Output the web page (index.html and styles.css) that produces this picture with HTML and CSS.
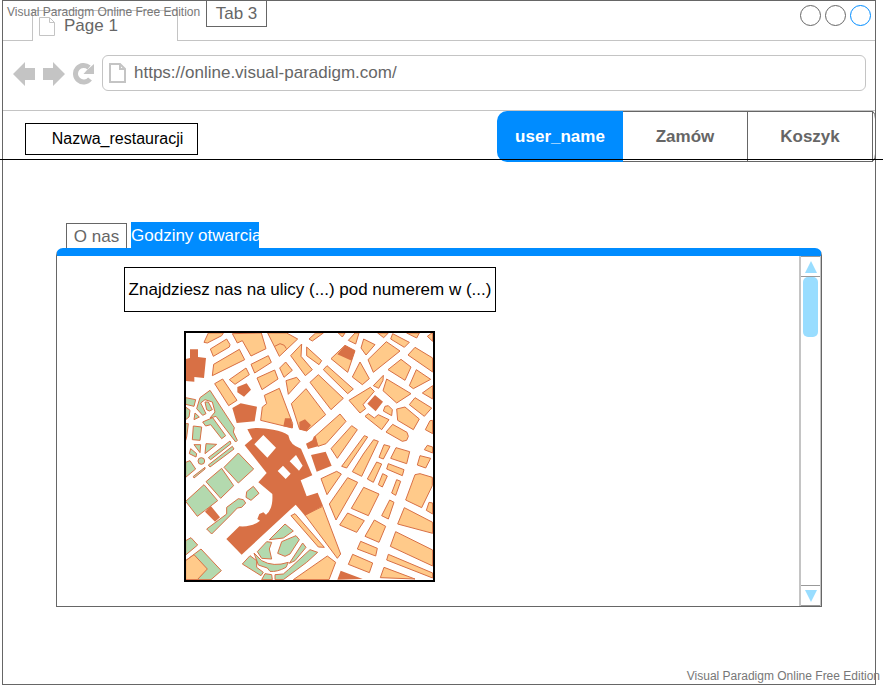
FILE: index.html
```html
<!DOCTYPE html>
<html lang="pl">
<head>
<meta charset="utf-8">
<title>Nazwa_restauracji</title>
<link rel="stylesheet" href="styles.css">
</head>
<body>
<div class="window">
  <div class="tabstrip">
    <div class="strip-start"></div>
    <div class="page-tab">
      <svg class="tab-icon" width="16" height="19" viewBox="0 0 16 19"><path d="M.5 .5H10.500L15.500 5.500V18.500H.5ZM10.500 .5V5.500H15.500" fill="#fff" stroke="#c4c4c4"/></svg>
      <span>Page 1</span>
    </div>
    <div class="strip-rest">
      <button class="tab-3" type="button">Tab 3</button>
      <div class="circles"><i></i><i></i><i class="blue"></i></div>
    </div>
  </div>
  <div class="toolbar">
    <button class="tool" type="button" aria-label="Back"><svg width="22" height="24" viewBox="0 0 22 24"><path d="M0 12L12 0V6H22V18H12V24Z" fill="#c4c4c4"/></svg></button>
    <button class="tool" type="button" aria-label="Forward"><svg width="22" height="24" viewBox="0 0 22 24"><path d="M22 12L10 0V6H0V18H10V24Z" fill="#c4c4c4"/></svg></button>
    <button class="tool" type="button" aria-label="Reload"><svg width="21" height="24" viewBox="0 0 21 24"><path d="M17 17A8.200 8.200 0 1 1 16 5.500" fill="none" stroke="#c4c4c4" stroke-width="5"/><path d="M21 2V12H10.500L14 8Z" fill="#c4c4c4"/></svg></button>
    <label class="address">
      <svg width="17" height="20" viewBox="0 0 17 20"><path d="M1 1H11L16 6V19H1ZM11 1V6H16" fill="#fff" stroke="#c4c4c4" stroke-width="2"/></svg>
      <input type="text" value="https://online.visual-paradigm.com/" aria-label="Address">
    </label>
  </div>
  <header class="site-header">
    <div class="brand">Nazwa_restauracji</div>
    <nav class="menu">
      <button class="active" type="button">user_name</button>
      <button type="button">Zamów</button>
      <button type="button">Koszyk</button>
      <svg class="menu-end" width="3" height="51" viewBox="0 0 3 51"><path d="M0 .5Q2.500 3 2.500 8M2.500 43Q2.500 47 0 50" fill="none" stroke="#666"/></svg>
    </nav>
  </header>
  <main class="content">
    <div class="tabs">
      <button class="tab" type="button">O nas</button>
      <button class="tab selected" type="button">Godziny otwarcia</button>
    </div>
    <section class="panel">
      <div class="panel-body">
        <p class="message">Znajdziesz nas na ulicy (...) pod numerem w (...)</p>
        <svg class="map" viewBox="12 14 753 753" role="img" aria-label="Mapa">
          <rect x="12" y="14" width="753" height="753" fill="#fff"/>
          <g class="block">
            <path d="M85 20H130L125 28L82 50L72 48ZM140 38L150 55L148 62L100 90L91 68ZM97 148L101 114L178 69L194 100ZM157 22L244 20L258 67L213 89L187 43L172 50ZM263 20H320L353 38L298 90ZM213 114L265 88L274 108L224 140ZM231 155L284 131L294 158L246 190ZM148 160L198 125L208 145L165 174ZM104 172L128 158L171 222L146 238ZM299 125L317 107L337 132L312 153ZM318 163L350 153L360 165L325 204ZM332 88L365 53L363 90L397 130L376 148Z"/>
            <path d="M284 60L300 52L313 57L319 67" fill="none"/>
          </g>
          <g class="block" transform="translate(375 0)">
            <path d="M12 38L32 20H55L22 44ZM100 20H120L112 32ZM150 20H162L152 53L130 42ZM218 20H250L236 34ZM263 22L313 48L298 63L257 38ZM305 20H343L335 35ZM367 30L383 18V45ZM176 38L210 55L183 86L168 65ZM244 46L285 74L205 138L189 100ZM330 63L383 95V137L309 86ZM288 99L318 122L300 162L249 130ZM334 130L377 159L325 187L313 178ZM165 107L193 157L172 175L142 152ZM120 57L150 73L128 138L78 97ZM66 118L145 188L128 202L55 130ZM40 145L115 216L78 250L15 168ZM235 147L234 162L221 186L205 178ZM245 158L318 202L275 230L234 193ZM132 222L196 183L208 195L174 235L182 247L165 260ZM240 240L250 238L262 250L260 268L235 254ZM180 270L190 262L208 275L220 265L252 280L230 310ZM275 248L300 242L343 278L325 310L278 282ZM263 294L306 318L310 330L305 342L292 345L243 317ZM330 214L380 245L358 270L313 235ZM352 200L383 178V218ZM375 283L383 282V322L361 310ZM367 357L383 362V380L358 370ZM5 62L50 103L42 115L5 88Z"/>
          </g>
          <g class="block" transform="translate(180 192)">
            <path d="M62 90L67 50L80 40L73 15L118 -6L158 100L157 113ZM154 40L198 -5L257 73L200 122L178 115ZM225 138L300 71L318 93L258 160L234 168ZM273 175L335 106L352 118L292 204Z"/>
          </g>
          <g class="block" transform="translate(375 378)">
            <path d="M142 58L175 5L206 -38L220 -33L170 72ZM110 42L178 -50L188 -46L125 47ZM48 79L95 57L109 65L66 127ZM73 155L128 76L158 90L93 203ZM176 105L222 125L190 190L139 168ZM128 182L178 205L155 240L104 218ZM208 203L242 222L222 270L180 252ZM254 143L267 150L250 200L230 190ZM167 267L217 288L212 311L157 290ZM143 306L203 332L193 361L130 336ZM330 67L345 64L382 75V100L350 166L302 143ZM298 166L383 210V243L278 215ZM272 238L383 293V341L256 282ZM250 306L383 362V377L245 323ZM237 345L330 380L226 376ZM372 150L383 152V185L364 174ZM275 82L287 87L272 129L260 122ZM233 64L247 71L232 104L220 97ZM215 29L230 35L205 90L187 80ZM250 34L297 52L292 70L245 50ZM273 -14L314 -2L305 34L257 18ZM237 -23L255 -18L235 20L222 15ZM345 10L377 18L362 47L337 38ZM0 188L53 162L107 305L97 318ZM-42 190L-30 184L58 285L40 284ZM-35 382L67 311L92 330L72 382Z"/>
          </g>
          <g class="landmark">
            <path d="M30 69H54V92L78 95L72 155L43 152V166L17 164V98L30 95ZM172 182L200 171L213 190L192 211L172 198ZM157 245L182 231L231 241L224 285L170 290Z"/>
            <path transform="translate(375 0)" d="M120 57L150 73L140 103L97 84ZM210 206L234 226L212 255L187 232Z"/>
            <path transform="translate(375 378)" d="M107 355L173 380L97 382ZM18 8L62 -2L80 40L35 58Z"/>
            <path transform="translate(180 192)" d="M135 84H153L158 113L130 108ZM178 95L195 87L213 105L200 122L178 118ZM198 160L217 150L222 138H227L234 168L204 176Z"/>
            <path transform="translate(180 192)" fill-rule="evenodd" d="M22 117Q50 108 100 118Q130 123 145 135Q150 165 183 175L217 255L182 270L200 318L233 307L249 346L195 376L167 343L5 493L-41 446L-2 408Q35 411 60 391L52 386L58 371L70 366L78 373Q100 356 97 311L55 276L80 248L14 165L37 145ZM70 134L43 162L82 202L108 172ZM168 194L149 213L177 241L188 226ZM129 226L113 242L137 266L152 250Z"/>
            <path transform="translate(0 378)" d="M92 160L120 195L105 208L75 178Z"/>
          </g>
          <g class="park" transform="translate(0 378)">
            <path d="M175 2L221 50L175 92L132 45ZM125 48L161 100L122 138L78 88ZM72 97L113 145L52 192L17 147ZM80 230L140 185V165L175 139L190 142L197 152L185 165L172 167L152 188L95 245ZM200 118L220 102L237 123L213 144L198 135ZM17 265L33 256L53 278L17 308ZM63 290L124 355L93 382H17V325ZM17 30L30 25L47 50L17 75ZM40 72L75 45V50L42 77ZM315 215L340 236L310 257L268 262ZM305 268L348 250L358 262L330 305L315 312L293 303ZM232 298L260 268L275 270L268 290L275 320L245 318ZM222 302L245 325Q280 345 325 330L318 345Q290 360 270 357L262 347L235 338ZM210 310L230 325V345L250 360L243 370L187 335ZM255 364L275 367L277 382H245ZM328 333L368 272L378 285L345 325ZM285 367L310 365L325 352L390 292L413 300L380 330L310 382H285Z"/>
          </g>
          <g class="park" transform="translate(0 192)">
            <path d="M90 0L163 112L160 125L172 150L167 155L108 78L90 83L105 65L97 35L75 28L62 38L78 70L68 75L50 55L60 22ZM75 35H85L97 58L88 62L80 58ZM68 95L98 82L137 136L125 145L92 103L77 107ZM17 22L47 28L42 48L17 42ZM17 50L30 60L27 80L17 88ZM45 68L58 80L42 88ZM40 107L65 110L60 150L37 148ZM17 100H25L20 140L17 150ZM78 160L110 162L75 190ZM42 163H62L60 187ZM32 175L50 190L48 200L28 190ZM85 224L157 168L162 176L90 230ZM85 202L150 152L153 160L92 208Z"/>
            <circle cx="64" cy="212" r="10"/>
          </g>
          <path class="block" d="M17 703L42 685L82 728L52 760H17Z"/>
          <rect x="15" y="17" width="747" height="747" fill="none" stroke="#000" stroke-width="6"/>
        </svg>
      </div>
      <div class="scrollbar">
        <button type="button" aria-label="Scroll up"><svg width="12" height="12" viewBox="0 0 12 12"><path d="M6 0L12 12H0Z" fill="#9df"/></svg></button>
        <div class="track"><div class="thumb"></div></div>
        <button class="down" type="button" aria-label="Scroll down"><svg width="12" height="12" viewBox="0 0 12 12"><path d="M0 0H12L6 12Z" fill="#9df"/></svg></button>
      </div>
    </section>
  </main>
</div>
<div class="watermark top">Visual Paradigm Online Free Edition</div>
<div class="watermark bottom">Visual Paradigm Online Free Edition</div>
</body>
</html>
```
FILE: styles.css
```css
* { box-sizing: border-box; }

body {
  margin: 0;
  position: relative;
  min-height: 100vh;
  display: flex;
  background: #fff;
  color: #666;
  font: 17px/20px "Liberation Sans", Arial, sans-serif;
}

button {
  padding: 0;
  border: 0;
  background: none;
  color: inherit;
  font: inherit;
}

svg { display: block; flex: none; }

.window {
  flex: 1;
  min-width: 0;
  margin: 0 9px 0 2px;
  border: 1px solid #666;
  display: flex;
  flex-direction: column;
}

.tabstrip { display: flex; height: 40px; }
.strip-start { width: 29px; border-bottom: 1px solid #c4c4c4; }

.page-tab {
  width: 146px;
  margin-top: 9px;
  padding: 6px 6px 0;
  border: solid #c4c4c4;
  border-width: 1px 1px 0;
  display: flex;
  gap: 9px;
  line-height: 18px;
}

.strip-rest {
  flex: 1;
  display: flex;
  align-items: flex-start;
  justify-content: space-between;
  padding: 0 4px 0 28px;
  border-bottom: 1px solid #c4c4c4;
}

.tab-3 {
  width: 61px;
  height: 27px;
  margin-top: -1px;
  padding-top: 1px;
  border: 1px solid #666;
}

.circles { display: flex; gap: 4px; padding-top: 4px; }
.circles i {
  width: 21px;
  height: 21px;
  border: 1px solid #666;
  border-radius: 50%;
}
.circles .blue { border-color: #008cff; }

.toolbar {
  height: 70px;
  display: flex;
  align-items: center;
  gap: 8px;
  padding: 0 9px 5px 10px;
  border-bottom: 1px solid #c4c4c4;
}
.tool { padding-top: 2px; }

.address {
  flex: 1;
  display: flex;
  align-items: center;
  gap: 8px;
  height: 36px;
  padding: 0 6px;
  border: 1px solid #c4c4c4;
  border-radius: 6px;
}

.address input {
  flex: 1;
  min-width: 0;
  padding: 0;
  border: 0;
  outline: 0;
  background: none;
  color: inherit;
  font: inherit;
}

.site-header {
  position: relative;
  display: flex;
  align-items: flex-start;
  justify-content: space-between;
  height: 51px;
  padding-left: 22px;
}

.site-header::after {
  content: "";
  position: absolute;
  left: -3px;
  right: -8px;
  bottom: 2px;
  height: 1px;
  background: #000;
}

.brand {
  width: 173px;
  height: 32px;
  margin-top: 12px;
  padding-left: 12px;
  border: 1px solid #000;
  color: #000;
  font-size: 16px;
  line-height: 30px;
  text-align: center;
}

.menu { display: flex; height: 51px; }
.menu button {
  width: 125px;
  border: 1px solid #666;
  border-left: 0;
  font-weight: bold;
}
.menu .active {
  width: 126px;
  border: 0;
  border-radius: 10px 0 0 10px;
  background: #008cff;
  color: #fff;
}
.menu-end { margin-right: -1px; }

.content { padding: 60px 53px 77px; }

.tabs { display: flex; align-items: flex-end; gap: 4px; padding-left: 10px; }
.tab {
  width: 61px;
  height: 25px;
  padding-top: 2px;
  border: 1px solid #666;
  border-bottom: 0;
}
.tab.selected {
  width: 128px;
  height: 26px;
  border: 0;
  overflow: hidden;
  background: #008cff;
  color: #fff;
  text-align: left;
  white-space: nowrap;
}

.panel {
  display: flex;
  border: 1px solid #666;
  border-top: 8px solid #008cff;
  border-radius: 7px 7px 0 0;
}

.panel-body { flex: 1; padding: 11px 0 24px 67px; }

.message {
  width: 372px;
  height: 45px;
  margin: 0 0 19px;
  border: 1px solid #000;
  color: #000;
  line-height: 43px;
  text-align: center;
  white-space: nowrap;
}

.map { width: 251px; height: 251px; margin-left: 60px; }
.block { fill: #ffca8a; stroke: #d87045; stroke-width: 3; }
.park { fill: #b3d9ae; stroke: #d87045; stroke-width: 3; }
.landmark { fill: #d87045; }

.scrollbar {
  width: 22px;
  display: flex;
  flex-direction: column;
  border: solid #c4c4c4;
  border-width: 0 1px 0 2px;
}
.scrollbar button {
  height: 21px;
  display: flex;
  align-items: center;
  justify-content: center;
  border: 1px solid #999;
  border-width: 1px 0;
}
.track { flex: 1; padding: 0 2px; }
.thumb { height: 60px; border-radius: 5px; background: #9df; }

.watermark {
  position: absolute;
  font-size: 12px;
  line-height: 14px;
  color: #777;
  white-space: nowrap;
}
.watermark.top { left: 7px; top: 5px; }
.watermark.bottom { right: 5px; bottom: 2px; }
```
